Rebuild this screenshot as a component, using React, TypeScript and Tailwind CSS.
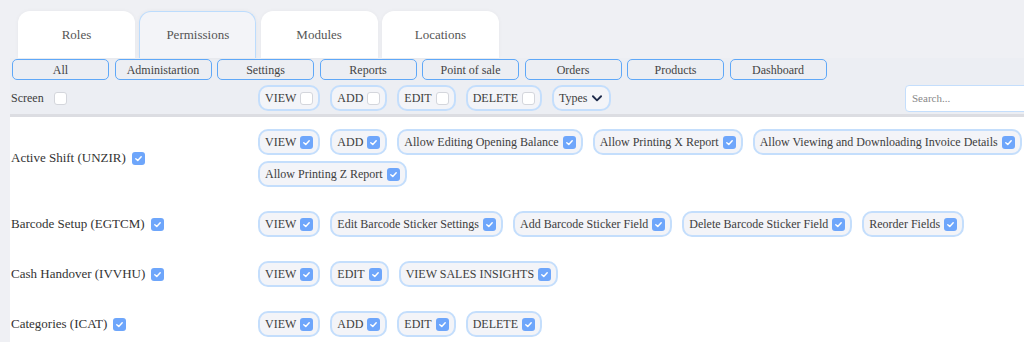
import React from "react";

function Check({ checked }: { checked: boolean }) {
  if (!checked) {
    return (
      <span className="inline-block w-[13px] h-[13px] rounded-[3px] bg-white border border-[#d4d6dc] shrink-0" />
    );
  }
  return (
    <span className="inline-flex items-center justify-center w-[13px] h-[13px] rounded-[3px] bg-[#6ea6fb] shrink-0">
      <svg width="9" height="9" viewBox="0 0 10 10" fill="none">
        <path d="M2 5.2 L4.2 7.2 L8 3" stroke="white" strokeWidth="1.6" strokeLinecap="round" strokeLinejoin="round" />
      </svg>
    </span>
  );
}

function Pill({ label, checked }: { label: string; checked: boolean }) {
  return (
    <span className="inline-flex items-center gap-[4px] h-[26px] px-[5px] rounded-[10px] border-2 border-[#c4defc] bg-[#f3f4f8] text-[12px] text-[#3d3d3d] whitespace-nowrap">
      <span>{label}</span>
      <Check checked={checked} />
    </span>
  );
}

const tabs = ["Roles", "Permissions", "Modules", "Locations"];
const filters = ["All", "Administartion", "Settings", "Reports", "Point of sale", "Orders", "Products", "Dashboard"];

const rows: { name: string; perms: string[] }[] = [
  {
    name: "Active Shift (UNZIR)",
    perms: [
      "VIEW",
      "ADD",
      "Allow Editing Opening Balance",
      "Allow Printing X Report",
      "Allow Viewing and Downloading Invoice Details",
      "Allow Printing Z Report",
    ],
  },
  {
    name: "Barcode Setup (EGTCM)",
    perms: ["VIEW", "Edit Barcode Sticker Settings", "Add Barcode Sticker Field", "Delete Barcode Sticker Field", "Reorder Fields"],
  },
  { name: "Cash Handover (IVVHU)", perms: ["VIEW", "EDIT", "VIEW SALES INSIGHTS"] },
  { name: "Categories (ICAT)", perms: ["VIEW", "ADD", "EDIT", "DELETE"] },
];

export default function App() {
  return (
    <div className="w-[1024px] h-[342px] overflow-hidden bg-[#eff0f4] text-[#3d3d3d] font-['Liberation_Serif','Times_New_Roman',serif]">
      <div className="flex gap-[4.3px] pt-[11px] pl-[18px]">
        {tabs.map((t) => (
          <div
            key={t}
            className={
              t === "Permissions"
                ? "w-[117px] h-[47px] rounded-t-[12px] bg-[#f3f4f8] border-[1.5px] border-b-0 border-[#bcdcfd] flex items-center justify-center text-[13px] text-[#555] shadow-[0_0_4px_rgba(0,0,0,0.05)]"
                : "w-[117px] h-[47px] rounded-t-[12px] bg-white flex items-center justify-center text-[13px] text-[#555] shadow-[0_0_4px_rgba(0,0,0,0.04)]"
            }
          >
            {t}
          </div>
        ))}
      </div>
      <div className="ml-[10px] bg-[#eceef3]">
        <div className="flex gap-[5.5px] pl-[2px] pt-[1px]">
          {filters.map((f) => (
            <div
              key={f}
              className="w-[97px] h-[21px] rounded-[5px] border-[1.5px] border-[#5fa8f8] flex items-center justify-center text-[12px] text-[#444]"
            >
              {f}
            </div>
          ))}
        </div>
        <div className="flex items-center h-[28px] mt-[4px]">
          <div className="w-[248px] shrink-0 flex items-center gap-[10px] text-[12px] pl-[1px]">
            <span>Screen</span>
            <Check checked={false} />
          </div>
          <div className="flex items-center gap-x-[10px]">
            <Pill label="VIEW" checked={false} />
            <Pill label="ADD" checked={false} />
            <Pill label="EDIT" checked={false} />
            <Pill label="DELETE" checked={false} />
            <span className="inline-flex items-center gap-[3px] h-[26px] px-[5px] rounded-[10px] border-2 border-[#c4defc] bg-[#f3f4f8] text-[12px]">
              <span>Types</span>
              <svg width="14" height="14" viewBox="0 0 24 24" fill="none" stroke="#1e2a4a" strokeWidth="3.2" strokeLinecap="round" strokeLinejoin="round">
                <path d="M5 9l7 7 7-7" />
              </svg>
            </span>
          </div>
          <div className="ml-auto w-[119px] shrink-0">
            <div className="w-[140px] h-[27px] bg-white border-[1.5px] border-[#c4defc] rounded-[4px] flex items-center pl-[6px] text-[11px] text-[#888]">
              Search...
            </div>
          </div>
        </div>
        <div className="h-[3px] mt-[2px] bg-[#dcdde2]" />
        <div className="bg-white">
          {rows.map((r) => (
            <div key={r.name} className="flex items-center py-[12px]">
              <div className="w-[248px] shrink-0 flex items-center gap-[6px] text-[13px] pl-[1px] text-[#333]">
                <span>{r.name}</span>
                <Check checked={true} />
              </div>
              <div className="w-[775px] shrink-0 flex flex-wrap gap-x-[10px] gap-y-[6px]">
                {r.perms.map((p) => (
                  <Pill key={p} label={p} checked={true} />
                ))}
              </div>
            </div>
          ))}
        </div>
      </div>
    </div>
  );
}
